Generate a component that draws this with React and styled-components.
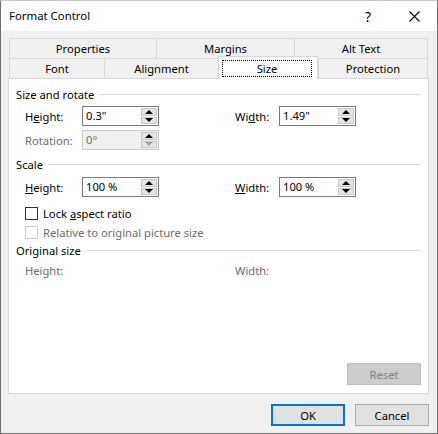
import React from "react";
import styled, { createGlobalStyle } from "styled-components";

const GlobalStyle = createGlobalStyle`
  html, body {
    margin: 0;
    padding: 0;
    background: #ffffff;
  }
  body {
    font-family: "Segoe UI", "Noto Sans", "Open Sans", sans-serif;
    font-size: 11.2px;
    color: #000;
  }
`;

const Window = styled.div`
  box-sizing: border-box;
  width: 438px;
  height: 434px;
  display: flex;
  flex-direction: column;
  background: #f0f0f0;
  border: 1px solid #707070;
  border-top-color: #c9c9c9;
`;

const TitleBar = styled.div`
  height: 30px;
  display: flex;
  align-items: center;
  background: #ffffff;
  padding-left: 8px;
`;

const Title = styled.span`
  flex: 1;
  font-size: 11.4px;
  margin-top: -1px;
`;

const TitleButton = styled.div`
  width: 46px;
  height: 30px;
  display: flex;
  align-items: center;
  justify-content: center;
  font-size: 14px;
`;

const Body = styled.div`
  flex: 1;
  display: flex;
  flex-direction: column;
  padding: 7px 8px 0 7px;
`;

const TabRow = styled.div`
  display: flex;
  align-items: flex-start;
  margin-left: 1px;
`;

const Tab = styled.div`
  box-sizing: border-box;
  width: ${(p) => p.w}px;
  height: 20px;
  display: flex;
  align-items: center;
  justify-content: center;
  border-top: 1px solid #d9d9d9;
  border-left: 1px solid #d9d9d9;
  &:last-child {
    border-right: 1px solid #d9d9d9;
  }
`;

const ActiveTab = styled(Tab)`
  position: relative;
  z-index: 1;
  height: 23px;
  margin-top: -2px;
  margin-bottom: -1px;
  background: #ffffff;
  border-right: 1px solid #d9d9d9;
  align-items: stretch;
  padding: 3px 5px 2px 3px;
`;

const FocusRect = styled.div`
  flex: 1;
  display: flex;
  align-items: center;
  justify-content: center;
  border: 1px dotted #000;
`;

const Panel = styled.div`
  box-sizing: border-box;
  height: 316px;
  display: flex;
  flex-direction: column;
  background: #ffffff;
  border: 1px solid #d9d9d9;
  padding: 7px 7px 8px 7px;
`;

const Heading = styled.div`
  height: 16px;
  display: flex;
  align-items: center;
  gap: 5px;
  margin-top: ${(p) => p.mt || 0}px;
  &::after {
    content: "";
    flex: 1;
    border-top: 1px solid #dcdcdc;
  }
`;

const FieldRow = styled.div`
  display: flex;
  align-items: center;
  height: ${(p) => p.h || 20}px;
  margin-top: ${(p) => p.mt || 0}px;
  padding-left: 9px;
`;

const FieldPair = styled.div`
  display: flex;
  align-items: center;
  width: ${(p) => p.w}px;
`;

const Label = styled.span`
  width: ${(p) => p.w}px;
  color: ${(p) => (p.disabled ? "#6d6d6d" : "#000")};
`;

const SpinBox = styled.div`
  box-sizing: border-box;
  width: 77px;
  height: 20px;
  display: flex;
  border: 1px solid ${(p) => (p.disabled ? "#cccccc" : "#7a7a7a")};
  background: ${(p) => (p.disabled ? "#f0f0f0" : "#ffffff")};
`;

const SpinValue = styled.span`
  flex: 1;
  padding-left: 3px;
  line-height: 17px;
  color: ${(p) => (p.disabled ? "#6d6d6d" : "#000")};
`;

const SpinButtons = styled.div`
  width: 16px;
  display: flex;
  flex-direction: column;
  gap: 1px;
  padding: 1px 1px 1px 0;
`;

const SpinButton = styled.div`
  flex: 1;
  display: flex;
  align-items: center;
  justify-content: center;
  background: #e5e5e5;
  border: 1px solid #c8c8c8;
`;

const Arrow = styled.div`
  width: 0;
  height: 0;
  border-left: 4px solid transparent;
  border-right: 4px solid transparent;
  ${(p) =>
    p.down
      ? `border-top: 4px solid ${p.dim ? "#a0a0a0" : "#000"};`
      : `border-bottom: 4px solid ${p.dim ? "#a0a0a0" : "#000"};`}
`;

const CheckRow = styled.label`
  display: flex;
  align-items: center;
  gap: 5px;
  height: 16px;
  margin-top: ${(p) => p.mt || 0}px;
  padding-left: 9px;
  color: ${(p) => (p.disabled ? "#6d6d6d" : "#000")};
`;

const CheckBox = styled.span`
  box-sizing: border-box;
  width: 13px;
  height: 13px;
  background: #ffffff;
  border: 1px solid ${(p) => (p.disabled ? "#cccccc" : "#333333")};
`;

const Spacer = styled.div`
  flex: 1;
`;

const ButtonRow = styled.div`
  display: flex;
  justify-content: flex-end;
  gap: 10px;
  padding: ${(p) => p.pad || "0"};
`;

const Button = styled.div`
  box-sizing: border-box;
  width: 74px;
  height: 22px;
  display: flex;
  align-items: center;
  justify-content: center;
  background: ${(p) => (p.disabled ? "#cccccc" : "#e1e1e1")};
  border: ${(p) =>
    p.primary ? "2px solid #0078d7" : `1px solid ${p.disabled ? "#bfbfbf" : "#adadad"}`};
  color: ${(p) => (p.disabled ? "#838383" : "#000")};
`;

const Spin = ({ value, disabled }) => (
  <SpinBox disabled={disabled}>
    <SpinValue disabled={disabled}>{value}</SpinValue>
    <SpinButtons>
      <SpinButton>
        <Arrow />
      </SpinButton>
      <SpinButton>
        <Arrow down dim={disabled} />
      </SpinButton>
    </SpinButtons>
  </SpinBox>
);

const App = () => (
  <Window>
    <GlobalStyle />
    <TitleBar>
      <Title>Format Control</Title>
      <TitleButton>?</TitleButton>
      <TitleButton>
        <svg width="11" height="11" viewBox="0 0 11 11">
          <path d="M0.5 0.5 L10.5 10.5 M10.5 0.5 L0.5 10.5" stroke="#000" strokeWidth="1.1" />
        </svg>
      </TitleButton>
    </TitleBar>
    <Body>
      <TabRow>
        <Tab w={147}>Properties</Tab>
        <Tab w={138}>Margins</Tab>
        <Tab w={134}>Alt Text</Tab>
      </TabRow>
      <TabRow>
        <Tab w={95}>Font</Tab>
        <Tab w={114}>Alignment</Tab>
        <ActiveTab w={100}>
          <FocusRect>Size</FocusRect>
        </ActiveTab>
        <Tab w={110}>Protection</Tab>
      </TabRow>
      <Panel>
        <Heading>Size and rotate</Heading>
        <FieldRow mt={4}>
          <FieldPair w={210}>
            <Label w={57}>
              H<u>e</u>ight:
            </Label>
            <Spin value={'0.3"'} />
          </FieldPair>
          <FieldPair w={121}>
            <Label w={44}>
              Wi<u>d</u>th:
            </Label>
            <Spin value={'1.49"'} />
          </FieldPair>
        </FieldRow>
        <FieldRow mt={4}>
          <FieldPair w={210}>
            <Label w={57} disabled>
              Rotation:
            </Label>
            <Spin value="0°" disabled />
          </FieldPair>
        </FieldRow>
        <Heading mt={6}>Scale</Heading>
        <FieldRow mt={5}>
          <FieldPair w={210}>
            <Label w={57}>
              <u>H</u>eight:
            </Label>
            <Spin value="100 %" />
          </FieldPair>
          <FieldPair w={121}>
            <Label w={44}>
              <u>W</u>idth:
            </Label>
            <Spin value="100 %" />
          </FieldPair>
        </FieldRow>
        <CheckRow mt={8}>
          <CheckBox />
          <span>
            Lock <u>a</u>spect ratio
          </span>
        </CheckRow>
        <CheckRow mt={3} disabled>
          <CheckBox disabled />
          <span>Relative to original picture size</span>
        </CheckRow>
        <Heading mt={2}>Original size</Heading>
        <FieldRow mt={4} h={16}>
          <FieldPair w={210}>
            <Label w={57} disabled>
              Height:
            </Label>
          </FieldPair>
          <FieldPair w={121}>
            <Label w={44} disabled>
              Width:
            </Label>
          </FieldPair>
        </FieldRow>
        <Spacer />
        <ButtonRow>
          <Button disabled>Reset</Button>
        </ButtonRow>
      </Panel>
      <ButtonRow pad="10px 0 0 0">
        <Button primary>OK</Button>
        <Button>Cancel</Button>
      </ButtonRow>
    </Body>
  </Window>
);

export default App;
